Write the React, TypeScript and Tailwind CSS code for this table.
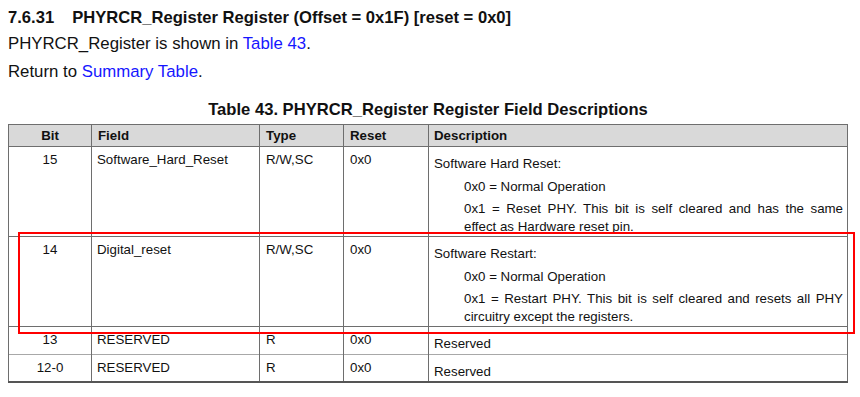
import React from 'react';

type Row = {
  bit: string;
  field: string;
  type: string;
  reset: string;
  height: string;
  title: string;
  options?: string[];
  borderB: string;
};

const rows: Row[] = [
  {
    bit: '15',
    field: 'Software_Hard_Reset',
    type: 'R/W,SC',
    reset: '0x0',
    height: 'h-[90px]',
    title: 'Software Hard Reset:',
    options: ['0x0 = Normal Operation', '0x1 = Reset PHY. This bit is self cleared and has the same effect as Hardware reset pin.'],
    borderB: 'border-b-[#6e6e6e]',
  },
  {
    bit: '14',
    field: 'Digital_reset',
    type: 'R/W,SC',
    reset: '0x0',
    height: 'h-[90px]',
    title: 'Software Restart:',
    options: ['0x0 = Normal Operation', '0x1 = Restart PHY. This bit is self cleared and resets all PHY circuitry except the registers.'],
    borderB: 'border-b-[#6e6e6e]',
  },
  { bit: '13', field: 'RESERVED', type: 'R', reset: '0x0', height: 'h-[28px]', title: 'Reserved', borderB: 'border-b-[#a8a8a8]' },
  { bit: '12-0', field: 'RESERVED', type: 'R', reset: '0x0', height: 'h-[27px]', title: 'Reserved', borderB: 'border-b-[#555]' },
];

const cell = 'border-x border-[#6e6e6e] align-top';

export default function App() {
  return (
    <div className="relative w-[860px] h-[397px] overflow-hidden bg-white text-[#111] font-['Liberation_Sans',Arial,sans-serif]">
      <div className="pl-[8px] pt-[8px]">
        <h3 className="flex text-[16.6px] leading-[20px] font-bold">
          <span>7.6.31</span>
          <span className="ml-[18px]">PHYRCR_Register Register (Offset = 0x1F) [reset = 0x0]</span>
        </h3>
        <p className="mt-[6px] text-[16.8px] leading-[20px]">
          PHYRCR_Register is shown in <span className="text-[#1616ff]">Table 43</span>.
        </p>
        <p className="mt-[8px] text-[16.8px] leading-[20px]">
          Return to <span className="text-[#1616ff]">Summary Table</span>.
        </p>
      </div>

      <div className="mt-[18px] w-[840px] ml-[8px] text-center text-[16.6px] leading-[20px] font-bold">
        Table 43. PHYRCR_Register Register Field Descriptions
      </div>

      <table className="mt-[4px] ml-[8px] w-[840px] table-fixed border-collapse text-[13.3px]">
        <colgroup>
          <col className="w-[83px]" />
          <col className="w-[168px]" />
          <col className="w-[84px]" />
          <col className="w-[85px]" />
          <col />
        </colgroup>
        <thead>
          <tr className="h-[22px] bg-[#d9d9d9] border border-[#6e6e6e] font-bold leading-[16px]">
            <th className={`${cell} pt-[3px] text-center`}>Bit</th>
            <th className={`${cell} pt-[3px] pl-[6px] text-left`}>Field</th>
            <th className={`${cell} pt-[3px] pl-[6px] text-left`}>Type</th>
            <th className={`${cell} pt-[3px] pl-[6px] text-left`}>Reset</th>
            <th className={`${cell} pt-[3px] pl-[5px] text-left`}>Description</th>
          </tr>
        </thead>
        <tbody>
          {rows.map((r) => (
            <tr key={r.bit} className={`${r.height} border-b ${r.borderB} ${r.bit === '12-0' ? 'border-b-2' : ''}`}>
              <td className={`${cell} pt-[5px] leading-[16px] text-center`}>{r.bit}</td>
              <td className={`${cell} pt-[5px] leading-[16px] pl-[5px]`}>{r.field}</td>
              <td className={`${cell} pt-[5px] leading-[16px] pl-[6px]`}>{r.type}</td>
              <td className={`${cell} pt-[5px] leading-[16px] pl-[6px]`}>{r.reset}</td>
              <td className={`${cell} pt-[8px] pl-[5px] pr-[4px] leading-[17.5px]`}>
                <div>{r.title}</div>
                {r.options?.map((o) => (
                  <div key={o} className="mt-[5px] pl-[30px] text-justify">
                    {o}
                  </div>
                ))}
              </td>
            </tr>
          ))}
        </tbody>
      </table>

      <div className="absolute left-[18px] top-[232px] w-[837px] h-[102px] border-2 border-[#ff0000] pointer-events-none" />
    </div>
  );
}
